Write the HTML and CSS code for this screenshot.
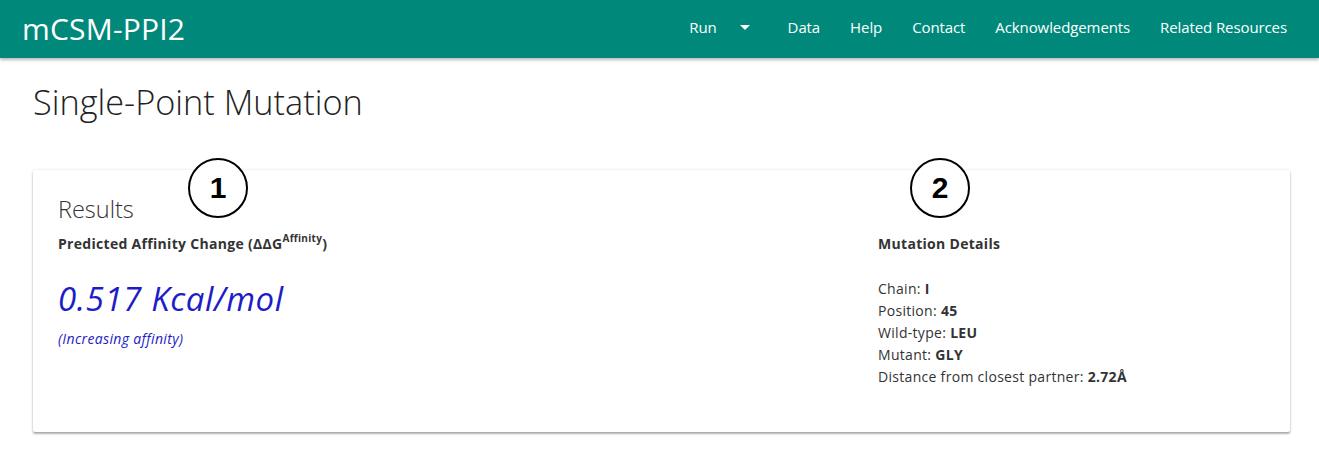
FILE: index.html
```html
<!DOCTYPE html>
<html lang="en">
<head>
<meta charset="utf-8">
<title>mCSM-PPI2 - Single-Point Mutation</title>
<link rel="stylesheet" href="styles.css">
</head>
<body>
<header class="navbar">
  <a class="brand" href="#">mCSM-PPI2</a>
  <nav class="nav">
    <a class="nav-item dropdown" href="#">Run<span class="caret"></span></a>
    <a class="nav-item" href="#">Data</a>
    <a class="nav-item" href="#">Help</a>
    <a class="nav-item" href="#">Contact</a>
    <a class="nav-item" href="#">Acknowledgements</a>
    <a class="nav-item" href="#">Related Resources</a>
  </nav>
</header>
<main class="container">
  <h1 class="page-title">Single-Point Mutation</h1>
  <section class="card">
    <span class="marker marker-1">1</span>
    <span class="marker marker-2">2</span>
    <h2 class="card-title">Results</h2>
    <div class="cols">
      <div class="col-left">
        <div class="label">Predicted Affinity Change (&Delta;&Delta;G<sup>Affinity</sup>)</div>
        <div class="value">0.517 Kcal/mol</div>
        <div class="note">(Increasing affinity)</div>
      </div>
      <div class="col-right">
        <div class="label">Mutation Details</div>
        <ul class="details">
          <li>Chain: <b>I</b></li>
          <li>Position: <b>45</b></li>
          <li>Wild-type: <b>LEU</b></li>
          <li>Mutant: <b>GLY</b></li>
          <li>Distance from closest partner: <b>2.72&Aring;</b></li>
        </ul>
      </div>
    </div>
  </section>
</main>
</body>
</html>
```
FILE: styles.css
```css
* { box-sizing: border-box; }
html, body { margin: 0; padding: 0; background: #fff; }
body {
  font-family: "Open Sans", "Noto Sans", "DejaVu Sans", sans-serif;
  color: #212529;
}
a { text-decoration: none; color: inherit; }

.navbar {
  height: 58px;
  background: #00897b;
  display: flex;
  align-items: center;
  justify-content: space-between;
  padding: 0 32px 0 22px;
  box-shadow: 0 2px 3px rgba(0,0,0,0.28);
  position: relative;
  z-index: 2;
}
.brand {
  color: #fff;
  font-size: 30px;
  font-weight: 400;
  letter-spacing: 0.2px;
  margin-top: -2px;
}
.nav {
  display: flex;
  align-items: center;
  gap: 30px;
  margin-top: -4px;
}
.nav-item {
  color: #fff;
  font-size: 15px;
  letter-spacing: -0.1px;
}
.dropdown { display: flex; align-items: center; }
.caret {
  display: inline-block;
  width: 0; height: 0;
  margin-left: 23px;
  margin-right: 8px;
  border-left: 5px solid transparent;
  border-right: 5px solid transparent;
  border-top: 5px solid #fff;
}

.container {
  padding: 0 29px 20px 33px;
}
.page-title {
  margin: 0;
  padding-top: 22px;
  font-size: 34.3px;
  line-height: 44px;
  font-weight: 300;
  color: #222;
  letter-spacing: 0;
}
.card {
  position: relative;
  margin-top: 46px;
  background: #fff;
  border-radius: 2px;
  padding: 25px 25px 44px 25px;
  box-shadow: 0 2px 2px rgba(0,0,0,0.30), 0 0 3px rgba(0,0,0,0.12);
}
.card-title {
  margin: 0;
  font-size: 23.5px;
  line-height: 28px;
  font-weight: 300;
  color: #333;
}
.cols {
  display: grid;
  grid-template-columns: 820px 1fr;
  margin-top: 11px;
}
.label {
  font-size: 14px;
  line-height: 20px;
  font-weight: 700;
  color: #333;
  letter-spacing: 0.3px;
}
.label sup {
  font-size: 10px;
  line-height: 0;
  position: relative;
  top: -1px;
}
.value {
  margin-top: 25px;
  font-size: 33px;
  line-height: 40px;
  font-style: italic;
  color: #1c1cc8;
  letter-spacing: 0.6px;
}
.note {
  margin-top: 10px;
  font-size: 14px;
  line-height: 20px;
  font-style: italic;
  color: #1c1cc8;
  letter-spacing: 0.35px;
}
.details {
  list-style: none;
  margin: 24px 0 0;
  padding: 0;
  font-size: 14px;
  line-height: 22px;
  color: #333;
  letter-spacing: 0.3px;
}
.details b { font-weight: 700; }

.marker {
  position: absolute;
  top: -12px;
  width: 60px;
  height: 60px;
  border: 2.5px solid #000;
  border-radius: 50%;
  background: #fff;
  display: flex;
  align-items: center;
  justify-content: center;
  font-family: "Liberation Sans", Arial, sans-serif;
  font-weight: 700;
  font-size: 30px;
  letter-spacing: 0;
  color: #000;
}
.marker-1 { left: 155px; }
.marker-2 { left: 877px; }
```
